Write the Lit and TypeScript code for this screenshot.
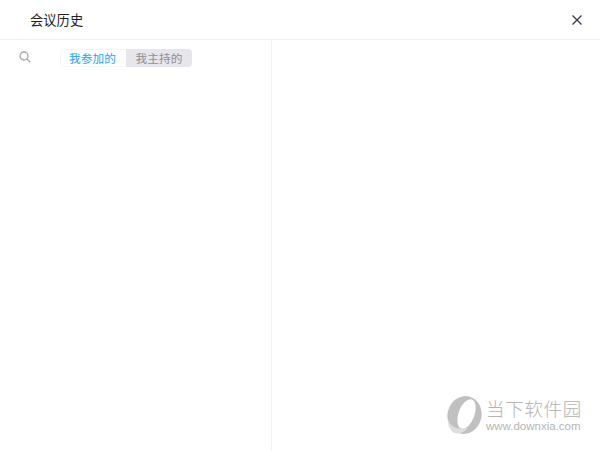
import { LitElement, html, css } from "lit";
import { customElement } from "lit/decorators.js";

@customElement("app-root")
export class AppRoot extends LitElement {
  static styles = css`
    :host {
      display: flex;
      flex-direction: column;
      width: 600px;
      height: 451px;
      background: #fff;
      font-family: "Noto Sans CJK SC", "Liberation Sans", sans-serif;
      position: relative;
      overflow: hidden;
    }
    .header {
      height: 39px;
      flex: none;
      display: flex;
      align-items: center;
      justify-content: space-between;
      padding: 0 17px 0 30px;
      border-bottom: 1px solid #f2f2f4;
    }
    .title { font-size: 13.3px; color: #222; line-height: 39px; }
    .close { display: block; }
    .body { flex: 1; display: flex; min-height: 0; }
    .left {
      width: 252px;
      flex: none;
      border-right: 1px solid #f2f2f4;
      display: flex;
      align-items: flex-start;
      padding: 9px 0 0 19px;
    }
    .search { display: block; margin-right: 29px; margin-top: 2px; }
    .tabs {
      display: flex;
      height: 18px;
      border-radius: 4px;
      overflow: hidden;
      font-size: 11.7px;
      line-height: 18px;
    }
    .tab { width: 66px; text-align: center; }
    .tab.on { color: #18a5fb; background: #fff; border: 1px solid #f4f5f8; border-right: 0; border-radius: 4px 0 0 4px; box-sizing: border-box; line-height: 16px; padding-right: 2px; }
    .tab.off { color: #8e8e93; background: #e6e6ec; }
    .right { flex: 1; }
    .mark {
      position: absolute;
      left: 446px;
      top: 394px;
      display: flex;
      align-items: center;
      gap: 3px;
    }
    .mark-text { display: flex; flex-direction: column; }
    .mark-cn { font-size: 18.5px; line-height: 24px; letter-spacing: 0.7px; color: #b4b4b4; font-weight: 300; }
    .mark-en { font-family: "Liberation Sans", sans-serif; font-size: 11.5px; line-height: 13px; color: #b4b4b4; }
  `;

  render() {
    return html`
      <div class="header">
        <span class="title">会议历史</span>
        <svg class="close" width="12" height="12" viewBox="0 0 12 12">
          <path d="M1.500 1.500L10.500 10.500M10.500 1.500L1.500 10.500" stroke="#3a3f4a" stroke-width="1.4" fill="none"/>
        </svg>
      </div>
      <div class="body">
        <div class="left">
          <svg class="search" width="12" height="12" viewBox="0 0 12 12">
            <circle cx="5" cy="5" r="4" stroke="#aaa" stroke-width="1.3" fill="none"/>
            <path d="M8 8L11.300 11.300" stroke="#aaa" stroke-width="1.4" fill="none"/>
          </svg>
          <div class="tabs">
            <div class="tab on">我参加的</div>
            <div class="tab off">我主持的</div>
          </div>
        </div>
        <div class="right"></div>
      </div>
      <div class="mark">
        <svg width="37" height="41" viewBox="0 0 37 41">
          <ellipse cx="18.500" cy="21" rx="17" ry="19" transform="rotate(14 18.500 21)" fill="#c0c0c0"/>
          <path fill="#dedede" d="M2 25C4 33 13 37 22 34C18 39 11 41 7 38C3.500 36 1.500 30 2 25Z"/>
          <ellipse cx="20.500" cy="20" rx="8" ry="15.500" transform="rotate(20 20.500 20)" fill="#fff"/>
        </svg>
        <div class="mark-text">
          <span class="mark-cn">当下软件园</span>
          <span class="mark-en">www.downxia.com</span>
        </div>
      </div>
    `;
  }
}
